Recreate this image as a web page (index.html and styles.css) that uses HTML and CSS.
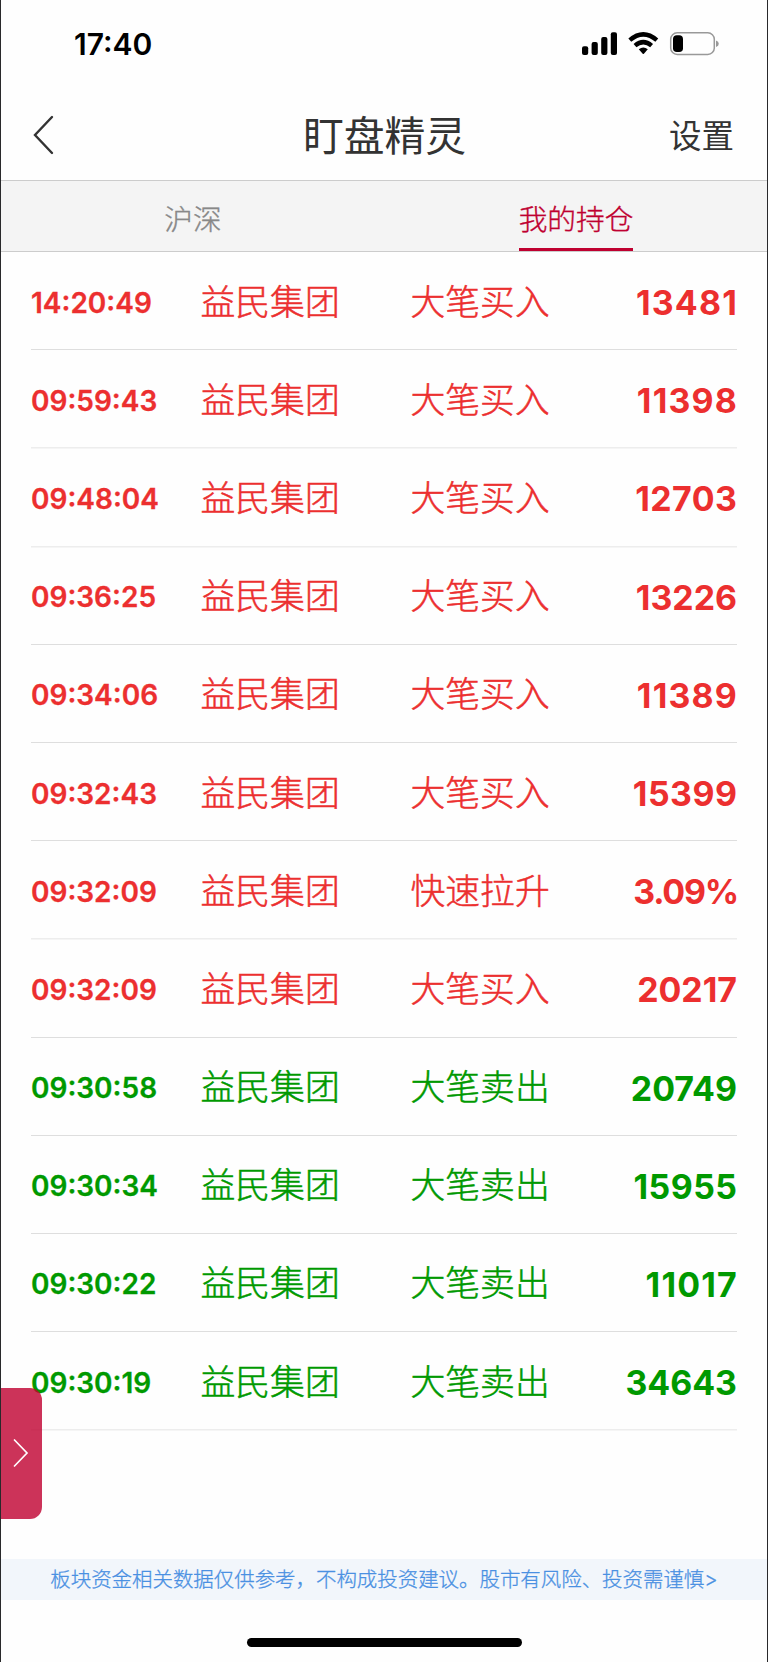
FILE: index.html
```
<!DOCTYPE html>
<html lang="zh-CN">
<head>
<meta charset="utf-8">
<title>盯盘精灵</title>
<link rel="stylesheet" href="styles.css">
</head>
<body>
<div class="screen">
  <div class="status">
    <span class="clock">17:40</span>
    <svg class="status-icons" width="138" height="24" viewBox="0 0 138 24">
      <rect x="0" y="14.2" width="6.2" height="8.8" rx="2"/>
      <rect x="9.6" y="10" width="6.2" height="13" rx="2"/>
      <rect x="19.2" y="5" width="6.2" height="18" rx="2"/>
      <rect x="28.8" y="0.3" width="6.2" height="22.7" rx="2"/>
      <path class="wave" d="M47.8 8.2Q61.3 -3.4 74.8 8.2M53 13.6Q61.3 6.6 69.6 13.6"/>
      <path d="M56.8 17.3Q61.3 13.8 65.8 17.3L61.9 21.8Q61.3 22.4 60.7 21.8Z"/>
      <rect class="shell" x="88.7" y="0.8" width="43.6" height="21.6" rx="6.5"/>
      <rect x="91" y="3.2" width="10" height="16.8" rx="3.8"/>
      <path class="cap" d="M134 8.6Q136.8 9.3 136.8 11.7T134 14.9Z"/>
    </svg>
  </div>
  <header class="nav">
    <svg class="back" width="22" height="40" viewBox="0 0 22 40"><path d="M20 2L3 20L20 38"/></svg>
    <h1 class="title">盯盘精灵</h1>
    <span class="settings">设置</span>
  </header>
  <nav class="tabs">
    <div class="tab"><span class="tab-label">沪深</span></div>
    <div class="tab"><span class="tab-label active">我的持仓</span></div>
  </nav>
  <main class="list">
    <div class="row"><span class="time">14:20:49</span><span class="name">益民集团</span><span class="kind">大笔买入</span><span class="num loose">13481</span></div>
    <div class="row"><span class="time">09:59:43</span><span class="name">益民集团</span><span class="kind">大笔买入</span><span class="num loose">11398</span></div>
    <div class="row"><span class="time">09:48:04</span><span class="name">益民集团</span><span class="kind">大笔买入</span><span class="num semi-loose">12703</span></div>
    <div class="row"><span class="time">09:36:25</span><span class="name">益民集团</span><span class="kind">大笔买入</span><span class="num">13226</span></div>
    <div class="row"><span class="time">09:34:06</span><span class="name">益民集团</span><span class="kind">大笔买入</span><span class="num loose">11389</span></div>
    <div class="row"><span class="time">09:32:43</span><span class="name">益民集团</span><span class="kind">大笔买入</span><span class="num semi-loose">15399</span></div>
    <div class="row"><span class="time">09:32:09</span><span class="name">益民集团</span><span class="kind">快速拉升</span><span class="num percent">3.09%</span></div>
    <div class="row"><span class="time">09:32:09</span><span class="name">益民集团</span><span class="kind">大笔买入</span><span class="num">20217</span></div>
    <div class="row sell"><span class="time">09:30:58</span><span class="name">益民集团</span><span class="kind">大笔卖出</span><span class="num">20749</span></div>
    <div class="row sell"><span class="time">09:30:34</span><span class="name">益民集团</span><span class="kind">大笔卖出</span><span class="num semi-loose">15955</span></div>
    <div class="row sell"><span class="time">09:30:22</span><span class="name">益民集团</span><span class="kind">大笔卖出</span><span class="num loose">11017</span></div>
    <div class="row sell"><span class="time">09:30:19</span><span class="name">益民集团</span><span class="kind">大笔卖出</span><span class="num">34643</span></div>
  </main>
  <footer class="notice">板块资金相关数据仅供参考，不构成投资建议。股市有风险、投资需谨慎&gt;</footer>
  <div class="home"></div>
  <div class="drawer"><svg width="16" height="28" viewBox="0 0 16 28"><path d="M1.5 1L14 14L1.5 27"/></svg></div>
</div>
</body>
</html>
```
FILE: styles.css
```
* { box-sizing: border-box; }
body { margin: 0; background: #fefefe; font-family: Inter, "Noto Sans CJK SC", sans-serif; color: #333; }
.screen {
  position: relative;
  display: flex;
  flex-direction: column;
  width: 768px;
  height: 1662px;
  border-left: 1px solid #29292b;
  border-right: 1px solid #29292b;
  overflow: hidden;
}
.status { display: flex; justify-content: space-between; align-items: center; height: 88px; padding: 0 47px 0 73px; color: #000; }
.clock { font-size: 30px; font-weight: 600; line-height: 36px; }
.status-icons { display: block; }
.wave { fill: none; stroke: #000; stroke-width: 4.4; }
.shell { fill: none; stroke: #999; stroke-width: 1.5; }
.cap { fill: #999; }
.nav { display: flex; justify-content: space-between; align-items: center; height: 92px; padding: 2px 33px 0 31px; }
.back { fill: none; stroke: #333; stroke-width: 2.4; stroke-linecap: round; }
.title { margin: 0 0 0 46px; padding-top: 2px; font-size: 40.8px; font-weight: 400; line-height: 60px; }
.settings { padding-top: 4px; font-size: 32.5px; line-height: 48px; }
.tabs { display: flex; height: 72px; background: #f4f4f4; border-top: 1px solid #ccc; border-bottom: 1px solid #ccc; }
.tab { display: flex; flex: 1; justify-content: center; padding-left: 1px; }
.tab-label { height: 70px; font-size: 28.7px; font-weight: 300; line-height: 77px; color: #888; -webkit-text-stroke: 0.35px; }
.active { color: #bf0030; border-bottom: 3px solid #bf0030; }
.list { height: 1178.4px; margin: 0 30px; }
.row { display: grid; grid-template-columns: 169.5px 210px 1fr auto; align-items: center; height: 98.2px; padding-top: 4px; border-bottom: 1px solid #dedede; color: #ec2f2f; }
.row:nth-child(5n+2), .row:nth-child(3) { border-bottom-color: #ededed; box-shadow: 0 1px #f5f5f5; }
.sell { color: #090; }
.time { font-size: 28px; font-weight: 600; -webkit-text-stroke: 0.3px; }
.name, .kind { padding-bottom: 2px; font-size: 34.8px; font-weight: 300; line-height: 52px; -webkit-text-stroke: 0.5px; }
.num { font-size: 33.9px; font-weight: 700; }
.loose { letter-spacing: 1.2px; margin-right: -1px; }
.semi-loose { letter-spacing: 0.5px; margin-right: -0.5px; }
.percent { letter-spacing: -1.2px; margin-right: -1px; }
.notice { height: 41px; margin-top: 129px; background: #f2f6fb; color: #4a90e2; font-size: 20.45px; font-weight: 300; line-height: 42px; text-align: center; white-space: nowrap; -webkit-text-stroke: 0.3px; }
.home { width: 275px; height: 9px; margin: 38px 0 0 246px; border-radius: 5px; background: #000; }
.drawer { position: absolute; left: 0; top: 1387.5px; display: flex; align-items: center; width: 40.5px; height: 131px; padding-left: 12px; border-radius: 0 12px 12px 0; background: rgba(191, 0, 48, 0.8); }
.drawer svg { fill: none; stroke: #fff; stroke-width: 1.7; stroke-linecap: round; }
```
